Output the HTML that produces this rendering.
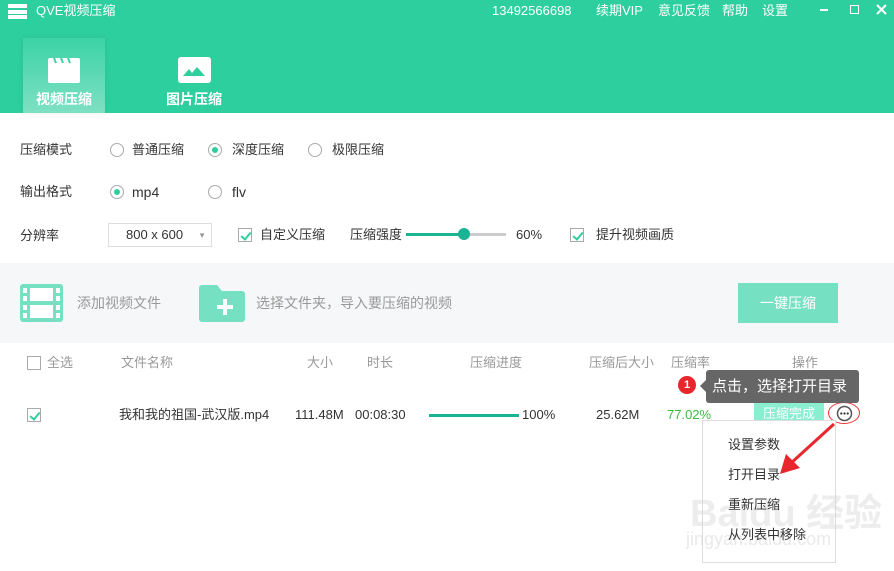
<!DOCTYPE html>
<html><head><meta charset="utf-8"><style>
*{margin:0;padding:0;box-sizing:border-box}
body{width:894px;height:571px;overflow:hidden;background:#fff;font-family:"Liberation Sans","Noto Sans CJK SC",sans-serif;font-size:13px;color:#333;position:relative;line-height:18px}
.a{position:absolute;white-space:nowrap}
.hdr{position:absolute;left:0;top:0;width:894px;height:113px;background:#2ecf9e}
.tab{position:absolute;left:23px;top:38px;width:82px;height:75px;background:linear-gradient(#3cd3a6,#7ee0c3);box-shadow:0 0 6px rgba(0,0,0,.08)}
.radio{position:absolute;width:14px;height:14px;border:1px solid #aaa;border-radius:50%;background:#fff}
.radio.on::after{content:"";position:absolute;left:3px;top:3px;width:6px;height:6px;border-radius:50%;background:#2ecf9e}
.cb{position:absolute;width:14px;height:14px;border:1px solid #aaa;background:#fff}
.cb.on::after{content:"";position:absolute;left:4px;top:1px;width:4px;height:8px;border:solid #2ecf9e;border-width:0 2px 2px 0;transform:rotate(40deg)}
.g{color:#999}
</style></head><body>
<div class="hdr"></div>
<div class="a" style="left:8px;top:4px;width:19px;height:15px">
<div style="height:4px;background:#fff;margin-bottom:1.5px"></div><div style="height:4px;background:#fff;margin-bottom:1.5px"></div><div style="height:4px;background:#fff"></div></div>
<div class="a" style="left:36px;top:2px;color:#fff">QVE视频压缩</div>
<div class="a" style="left:492px;top:2px;color:#fff">13492566698</div>
<div class="a" style="left:596px;top:2px;color:#fff">续期VIP</div>
<div class="a" style="left:658px;top:2px;color:#fff">意见反馈</div>
<div class="a" style="left:722px;top:2px;color:#fff">帮助</div>
<div class="a" style="left:762px;top:2px;color:#fff">设置</div>
<div class="a" style="left:820px;top:9px;width:8px;height:2px;background:#fff"></div>
<div class="a" style="left:850px;top:5px;width:9px;height:9px;border:1.5px solid #fff"></div>
<svg class="a" style="left:876px;top:4px" width="11" height="11"><path d="M1 1L10 10M10 1L1 10" stroke="#fff" stroke-width="2"/></svg>
<div class="tab"></div>
<svg class="a" style="left:47px;top:56px" width="34" height="28" viewBox="0 0 34 28"><rect x="1" y="2" width="32" height="25" rx="2" fill="#fff"/><path d="M7 2l2 5M14 2l2 5M21 2l2 5" stroke="#3dd2a5" stroke-width="2"/></svg>
<div class="a" style="left:36px;top:90px;color:#fff;font-size:14px;font-weight:bold">视频压缩</div>
<svg class="a" style="left:177px;top:56px" width="35" height="28" viewBox="0 0 35 28"><rect x="1" y="1" width="33" height="26" rx="3" fill="#fff"/><path d="M6 20l6-7 3 4 5-6 8 9z" fill="#2ecf9e"/></svg>
<div class="a" style="left:166px;top:90px;color:#fff;font-size:14px;font-weight:bold">图片压缩</div>

<div class="a" style="left:20px;top:141px">压缩模式</div>
<div class="radio" style="left:110px;top:143px"></div><div class="a" style="left:132px;top:141px">普通压缩</div>
<div class="radio on" style="left:208px;top:143px"></div><div class="a" style="left:232px;top:141px">深度压缩</div>
<div class="radio" style="left:308px;top:143px"></div><div class="a" style="left:332px;top:141px">极限压缩</div>
<div class="a" style="left:20px;top:183px">输出格式</div>
<div class="radio on" style="left:110px;top:185px"></div><div class="a" style="left:132px;top:183px;font-size:14px">mp4</div>
<div class="radio" style="left:208px;top:185px"></div><div class="a" style="left:232px;top:183px;font-size:14px">flv</div>
<div class="a" style="left:20px;top:227px">分辨率</div>
<div class="a" style="left:108px;top:223px;width:104px;height:24px;border:1px solid #ddd;padding:2px 0 0 17px">800 x 600<span style="position:absolute;right:5px;top:3px;font-size:8px;color:#999">▼</span></div>
<div class="cb on" style="left:238px;top:228px"></div><div class="a" style="left:260px;top:226px">自定义压缩</div>
<div class="a" style="left:350px;top:226px">压缩强度</div>
<div class="a" style="left:406px;top:233px;width:100px;height:3px;background:#ccc"></div>
<div class="a" style="left:406px;top:233px;width:58px;height:3px;background:#1ab394"></div>
<div class="a" style="left:458px;top:228px;width:12px;height:12px;border-radius:50%;background:#1ab394"></div>
<div class="a" style="left:516px;top:226px">60%</div>
<div class="cb on" style="left:570px;top:228px"></div><div class="a" style="left:596px;top:226px">提升视频画质</div>

<div class="a" style="left:0;top:263px;width:894px;height:80px;background:#f6f7f9"></div>
<svg class="a" style="left:20px;top:284px" width="43" height="38" viewBox="0 0 43 38"><rect x="0" y="0" width="43" height="38" rx="3" fill="#76e0c2"/><rect x="10" y="4" width="23" height="13" fill="#fff"/><rect x="10" y="21" width="23" height="13" fill="#fff"/><g fill="#fff"><rect x="3" y="4" width="4" height="5"/><rect x="3" y="12" width="4" height="5"/><rect x="3" y="21" width="4" height="5"/><rect x="3" y="29" width="4" height="5"/><rect x="36" y="4" width="4" height="5"/><rect x="36" y="12" width="4" height="5"/><rect x="36" y="21" width="4" height="5"/><rect x="36" y="29" width="4" height="5"/></g></svg>
<div class="a g" style="left:77px;top:294px;font-size:14px">添加视频文件</div>
<svg class="a" style="left:199px;top:285px" width="46" height="37" viewBox="0 0 46 37"><path d="M0 3a3 3 0 013-3h15l5 6h20a3 3 0 013 3v25a3 3 0 01-3 3H3a3 3 0 01-3-3z" fill="#76e0c2"/><path d="M26 14v16M18 22h16" stroke="#fff" stroke-width="4"/></svg>
<div class="a g" style="left:256px;top:294px;font-size:14px">选择文件夹，导入要压缩的视频</div>
<div class="a" style="left:738px;top:283px;width:100px;height:40px;background:#76e0c2;color:#fff;font-size:14px;text-align:center;line-height:40px">一键压缩</div>

<div class="cb" style="left:27px;top:356px"></div><div class="a g" style="left:47px;top:354px">全选</div>
<div class="a g" style="left:121px;top:354px">文件名称</div>
<div class="a g" style="left:307px;top:354px">大小</div>
<div class="a g" style="left:367px;top:354px">时长</div>
<div class="a g" style="left:470px;top:354px">压缩进度</div>
<div class="a g" style="left:589px;top:354px">压缩后大小</div>
<div class="a g" style="left:671px;top:354px">压缩率</div>
<div class="a g" style="left:792px;top:354px">操作</div>

<div class="cb on" style="left:27px;top:408px"></div>
<div class="a" style="left:119px;top:406px">我和我的祖国-武汉版.mp4</div>
<div class="a" style="left:295px;top:406px">111.48M</div>
<div class="a" style="left:355px;top:406px">00:08:30</div>
<div class="a" style="left:429px;top:414px;width:90px;height:3px;background:#1ab394"></div>
<div class="a" style="left:522px;top:406px">100%</div>
<div class="a" style="left:596px;top:406px">25.62M</div>
<div class="a" style="left:667px;top:406px;color:#3db83d">77.02%</div>
<div class="a" style="left:754px;top:401px;width:70px;height:26px;background:#8aeed0;color:#fff;text-align:center;line-height:26px">压缩完成</div>
<div class="a" style="left:828px;top:402px;width:32px;height:22px;border:1px solid #e33;border-radius:50%"></div>
<svg class="a" style="left:836px;top:405px" width="17" height="17"><circle cx="8.5" cy="8.5" r="7" fill="#fff" stroke="#555" stroke-width="1.5"/><circle cx="5.3" cy="8.5" r="1.1" fill="#333"/><circle cx="8.5" cy="8.5" r="1.1" fill="#333"/><circle cx="11.7" cy="8.5" r="1.1" fill="#333"/></svg>

<div class="a" style="left:702px;top:420px;width:134px;height:143px;background:#fff;border:1px solid #ddd"></div>
<div class="a" style="left:690px;top:492px;font-size:38px;color:rgba(215,215,215,.45);font-weight:bold;line-height:44px">Baidu 经验</div>
<div class="a" style="left:686px;top:530px;font-size:18px;color:rgba(215,215,215,.55)">jingyan.baidu.com</div>
<div class="a" style="left:728px;top:436px">设置参数</div>
<div class="a" style="left:728px;top:466px">打开目录</div>
<div class="a" style="left:728px;top:496px">重新压缩</div>
<div class="a" style="left:728px;top:526px">从列表中移除</div>

<div class="a" style="left:678px;top:376px;width:18px;height:18px;border-radius:50%;background:#e8262e;color:#fff;font-size:11px;text-align:center;line-height:18px;font-weight:bold">1</div>
<div class="a" style="left:700px;top:380px;width:0;height:0;border:6px solid transparent;border-right-color:#666;border-left:0"></div>
<div class="a" style="left:706px;top:370px;width:153px;height:33px;background:#666;border-radius:3px;color:#fff;font-size:15px;line-height:33px;padding-left:6px">点击，选择打开目录</div>
<svg class="a" style="left:770px;top:420px" width="70" height="60" viewBox="0 0 70 60"><path d="M64 4L20 44" stroke="#e8262e" stroke-width="3"/><path d="M10 54l6-20 14 14z" fill="#e8262e"/></svg>
</body></html>
